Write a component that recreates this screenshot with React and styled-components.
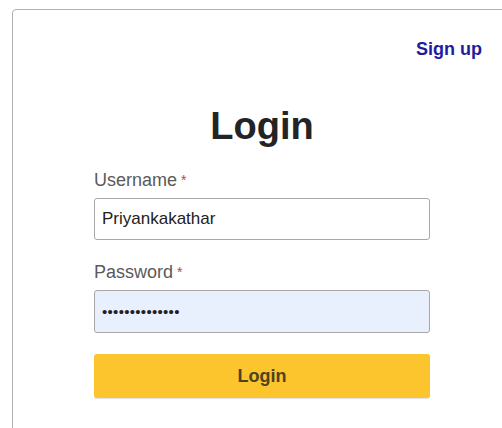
import React from 'react';
import styled, { createGlobalStyle } from 'styled-components';

const GlobalStyle = createGlobalStyle`
    body {
        margin: 0;
        background: #fff;
        font-family: "Liberation Sans", Arial, sans-serif;
        overflow: hidden;
    }
`;

const Card = styled.div`
    margin: 9px 0 0 12px;
    width: 498px;
    min-height: 440px;
    border: 1px solid #b0b0b0;
    border-radius: 4px;
    box-sizing: border-box;
    padding-top: 28px;
`;

const TopBar = styled.div`
    display: flex;
    justify-content: flex-end;
    padding-right: 27px;
`;

const SignUp = styled.a`
    font-size: 18px;
    line-height: 22px;
    font-weight: bold;
    color: #1d1d9e;
    text-decoration: none;
    cursor: pointer;
`;

const Form = styled.form`
    width: 336px;
    margin: 44px 0 0 81px;
    display: flex;
    flex-direction: column;
`;

const Title = styled.h1`
    margin: 0 0 21px;
    font-size: 38px;
    line-height: 44px;
    font-weight: bold;
    color: #222426;
    text-align: center;
`;

const Label = styled.label`
    font-size: 18px;
    line-height: 22px;
    color: #5a5a5a;
    margin-bottom: 7px;
`;

const Star = styled.span`
    color: #c9403f;
    font-size: 14px;
    vertical-align: top;
    margin-left: 4px;
`;

const Input = styled.input`
    box-sizing: border-box;
    width: 100%;
    height: ${p => p.$h || 42}px;
    margin: 0 0 21px;
    padding: 0 7px;
    border: 1px solid #a8a8a8;
    border-radius: 3px;
    font-family: inherit;
    font-size: ${p => (p.type === 'password' ? 15 : 17)}px;
    letter-spacing: ${p => (p.type === 'password' ? '0.3px' : 'normal')};
    color: #222;
    background: ${p => (p.$filled ? '#e8f0fe' : '#fff')};
    outline: none;
`;

const Button = styled.button`
    height: 44px;
    border: 0;
    border-radius: 3px;
    background: #fcc42d;
    box-shadow: 0 1px 1px rgba(0, 0, 0, 0.12);
    color: #4f4220;
    font-family: inherit;
    font-size: 18px;
    font-weight: bold;
    cursor: pointer;
`;

export default function App() {
    return (
        <>
            <GlobalStyle />
            <Card>
                <TopBar>
                    <SignUp>Sign up</SignUp>
                </TopBar>
                <Form onSubmit={e => e.preventDefault()}>
                    <Title>Login</Title>
                    <Label>
                        Username<Star>*</Star>
                    </Label>
                    <Input type="text" value="Priyankakathar" readOnly />
                    <Label>
                        Password<Star>*</Star>
                    </Label>
                    <Input type="password" value="Priyankakathar" readOnly $filled $h={43} />
                    <Button type="submit">Login</Button>
                </Form>
            </Card>
        </>
    );
}
